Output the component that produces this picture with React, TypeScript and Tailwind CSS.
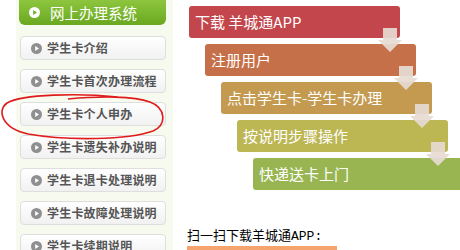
const cjk = { fontFamily: '"Noto Sans CJK SC", "Noto Sans", sans-serif' };

const menuItems = [
  "学生卡介绍",
  "学生卡首次办理流程",
  "学生卡个人申办",
  "学生卡遗失补办说明",
  "学生卡退卡处理说明",
  "学生卡故障处理说明",
  "学生卡续期说明",
];

const steps = [
  { text: "下载 羊城通APP", color: "bg-[#c2464b]", indent: "ml-[2px]" },
  { text: "注册用户", color: "bg-[#c6704a]", indent: "ml-[18px]" },
  { text: "点击学生卡-学生卡办理", color: "bg-[#c39a50]", indent: "ml-[34px]" },
  { text: "按说明步骤操作", color: "bg-[#bcb653]", indent: "ml-[50px]" },
  { text: "快递送卡上门", color: "bg-[#98b552]", indent: "ml-[66px]" },
];

function PlayDot({ light }: { light?: boolean }) {
  return (
    <svg width="11" height="11" viewBox="0 0 11 11" className="shrink-0">
      <circle cx="5.5" cy="5.5" r="5.5" fill={light ? "#ffffff" : "#8f8f8f"} />
      <path d="M4.2 3 L8 5.5 L4.2 8 Z" fill={light ? "#6fae25" : "#ffffff"} />
    </svg>
  );
}

function DownArrow() {
  return (
    <svg width="24" height="24" viewBox="0 0 24 24" className="absolute right-[-2px] top-[22px] z-10">
      <path d="M5 0 H19 V12 H24 L12 24 L0 12 H5 Z" fill="#e6dbd3" fillOpacity="0.92" />
    </svg>
  );
}

export default function App() {
  return (
    <div className="relative flex h-[250px] w-[460px] overflow-hidden bg-white" style={cjk}>
      <aside className="ml-[16px] h-full w-[157px] shrink-0 bg-[#f6faef] px-[3px]">
        <div className="flex h-[25px] w-[147px] items-center gap-[10px] rounded-b-[6px] bg-gradient-to-b from-[#8dc63e] to-[#6aa820] pl-[10px] text-[14.5px] text-white">
          <PlayDot light />
          <span>网上办理系统</span>
        </div>
        <div className="mt-[11px] flex flex-col gap-[9px] pl-[1px]">
          {menuItems.map((label) => (
            <div
              key={label}
              className="flex h-[24px] w-[146px] items-center gap-[5px] rounded-[4px] border border-[#dedede] bg-gradient-to-b from-white to-[#f1f1f1] pl-[10px] text-[12px] font-bold tracking-[0.2px] text-[#555]"
            >
              <PlayDot />
              <span>{label}</span>
            </div>
          ))}
        </div>
      </aside>

      <svg width="170" height="50" viewBox="0 0 170 50" className="absolute left-0 top-[90px]">
        <path
          d="M118 7 C80 3 22 4 7 13 C-3 20 1 38 28 44 C68 51 128 50 153 41 C167 35 166 18 150 12 C134 6 100 6 68 9"
          fill="none"
          stroke="#e01b1b"
          strokeWidth="1.6"
        />
      </svg>

      <main className="ml-[14px] flex shrink-0 flex-col">
        <div className="flex flex-col gap-[6px] pt-[6px]">
          {steps.map((s, i) => (
            <div
              key={s.text}
              className={`relative flex h-[32px] w-[211px] shrink-0 items-center rounded-[3px] pl-[6px] text-[15px] text-white ${s.color} ${s.indent}`}
            >
              <span>{s.text}</span>
              {i < steps.length - 1 && <DownArrow />}
            </div>
          ))}
        </div>
        <p className="mt-[37px] text-[13px] leading-[16px] text-black">
          扫一扫下载羊城通<span style={{ fontFamily: '"Liberation Mono", monospace' }}>APP:</span>
        </p>
        <div className="mt-[1px] h-[10px] w-[150px] bg-[#f5a46d]" />
      </main>
    </div>
  );
}
